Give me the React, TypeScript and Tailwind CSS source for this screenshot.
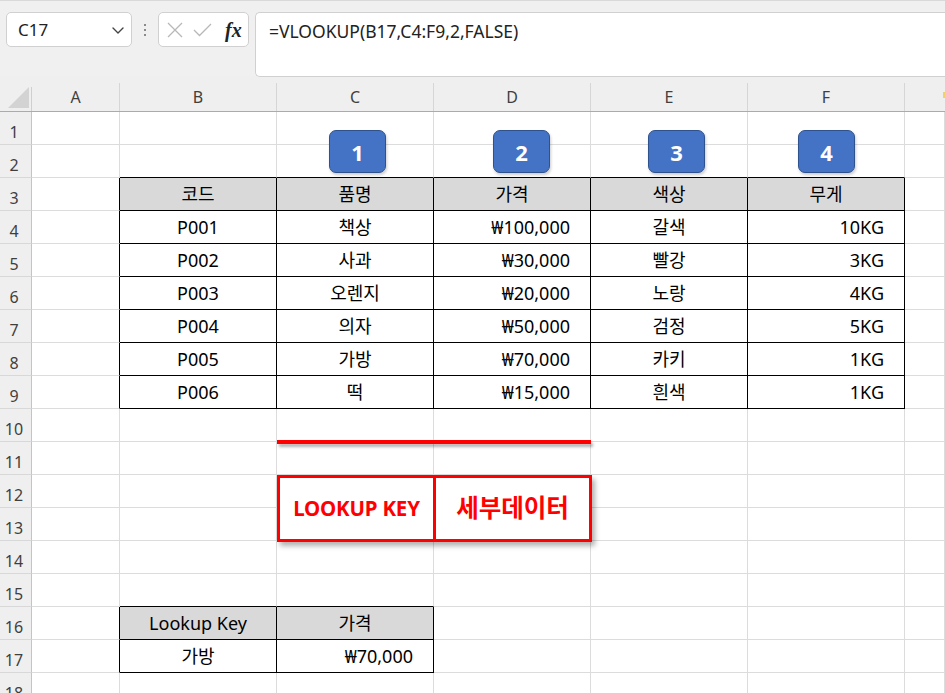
import React from "react";

const FONT = { fontFamily: '"Noto Sans", "Noto Sans CJK KR", sans-serif' };

const COLS = [
  { key: "A", w: "w-[88px]" },
  { key: "B", w: "w-[157px]" },
  { key: "C", w: "w-[157px]" },
  { key: "D", w: "w-[157px]" },
  { key: "E", w: "w-[157px]" },
  { key: "F", w: "w-[157px]" },
  { key: "", w: "flex-1" },
];

type Cell = { text: string; right?: boolean };

// sheet contents keyed by row, then column index (A = 0)
const DATA: Record<number, Record<number, Cell>> = {
  3: { 1: { text: "코드" }, 2: { text: "품명" }, 3: { text: "가격" }, 4: { text: "색상" }, 5: { text: "무게" } },
  4: { 1: { text: "P001" }, 2: { text: "책상" }, 3: { text: "₩100,000", right: true }, 4: { text: "갈색" }, 5: { text: "10KG", right: true } },
  5: { 1: { text: "P002" }, 2: { text: "사과" }, 3: { text: "₩30,000", right: true }, 4: { text: "빨강" }, 5: { text: "3KG", right: true } },
  6: { 1: { text: "P003" }, 2: { text: "오렌지" }, 3: { text: "₩20,000", right: true }, 4: { text: "노랑" }, 5: { text: "4KG", right: true } },
  7: { 1: { text: "P004" }, 2: { text: "의자" }, 3: { text: "₩50,000", right: true }, 4: { text: "검정" }, 5: { text: "5KG", right: true } },
  8: { 1: { text: "P005" }, 2: { text: "가방" }, 3: { text: "₩70,000", right: true }, 4: { text: "카키" }, 5: { text: "1KG", right: true } },
  9: { 1: { text: "P006" }, 2: { text: "떡" }, 3: { text: "₩15,000", right: true }, 4: { text: "흰색" }, 5: { text: "1KG", right: true } },
  16: { 1: { text: "Lookup Key" }, 2: { text: "가격" } },
  17: { 1: { text: "가방" }, 2: { text: "₩70,000", right: true } },
};

const ROWS = Array.from({ length: 18 }, (_, i) => i + 1);

function inTable(r: number, c: number) {
  const main = r >= 3 && r <= 9 && c >= 1 && c <= 5;
  const sub = r >= 16 && r <= 17 && c >= 1 && c <= 2;
  return main || sub;
}

function isHeader(r: number, c: number) {
  return (r === 3 || r === 16) && inTable(r, c);
}

function FormulaBar() {
  return (
    <div className="flex h-[76px] items-start border-t border-t-[#d9d9d9] bg-[#f0f0f0] pl-[6px] pt-[11px]">
      {/* name box */}
      <div className="flex h-[35px] w-[126px] items-center justify-between rounded-[5px] border border-[#d0d0d0] bg-white pl-[11px] pr-[6px]">
        <span className="text-[17px] leading-none text-[#222]">C17</span>
        <svg width="14" height="14" viewBox="0 0 14 14" fill="none">
          <path d="M2 5 L7 10 L12 5" stroke="#444" strokeWidth="1.4" strokeLinecap="round" strokeLinejoin="round" />
        </svg>
      </div>
      <div className="flex h-[35px] w-[26px] flex-col items-center justify-center gap-[3px]">
        <span className="h-[2px] w-[2px] bg-[#8a8a8a]" />
        <span className="h-[2px] w-[2px] bg-[#8a8a8a]" />
        <span className="h-[2px] w-[2px] bg-[#8a8a8a]" />
      </div>
      {/* cancel / enter / fx */}
      <div className="flex h-[35px] w-[91px] items-center rounded-[5px] border border-[#d0d0d0] bg-white pl-[8px]">
        <svg width="16" height="16" viewBox="0 0 16 16" fill="none">
          <path d="M1 1 L15 15 M15 1 L1 15" stroke="#b8b8b8" strokeWidth="1.3" />
        </svg>
        <svg className="ml-[10px]" width="19" height="14" viewBox="0 0 19 14" fill="none">
          <path d="M1 7 L6.5 12.5 L18 1" stroke="#b8b8b8" strokeWidth="1.3" />
        </svg>
        <span
          className="ml-[13px] text-[20px] font-bold italic leading-none text-[#222]"
          style={{ fontFamily: '"Liberation Serif", "DejaVu Serif", serif' }}
        >
          fx
        </span>
      </div>
      {/* formula text */}
      <div className="ml-[6px] h-[65px] flex-1 rounded-l-[5px] border border-r-0 border-[#d0d0d0] bg-white pl-[13px] pt-[7px]">
        <span className="text-[17.5px] leading-[20px] text-[#222]">=VLOOKUP(B17,C4:F9,2,FALSE)</span>
      </div>
    </div>
  );
}

function ColumnHeaders() {
  return (
    <div className="flex h-[36px] border-b border-b-[#ababab] bg-[#efefef]">
      <div className="flex w-[32px] items-end">
        <svg width="31" height="36" viewBox="0 0 31 36">
          <polygon points="8,33 29,33 29,12" fill="#d3d3d3" />
        </svg>
        <span className="h-[24px] w-px bg-[#cfcfcf]" />
      </div>
      {COLS.map((col, i) => (
        <div key={i} className={`flex ${col.w} items-end`}>
          <span className="flex-1 self-center pt-[7px] text-center text-[16px] leading-none text-[#3f3f3f]">
            {col.key}
          </span>
          {col.key ? (
            <span className="h-[28px] w-px bg-[#d6d6d6]" />
          ) : (
            <span className="mb-[13px] h-[6px] w-[2px] self-end bg-[#f2d16b]" />
          )}
        </div>
      ))}
    </div>
  );
}

function SheetRow({ r }: { r: number }) {
  return (
    <div className="flex h-[33px] shrink-0">
      <div className="flex w-[32px] items-center justify-center border-r border-b border-r-[#c4c4c4] border-b-[#d8d8d8] bg-[#efefef] pr-[3px] pt-[7px] text-[16px] leading-none text-[#3f3f3f]">
        {r}
      </div>
      {COLS.map((col, c) => {
        const cell = DATA[r]?.[c];
        const blackR = inTable(r, c) || inTable(r, c + 1);
        const blackB = inTable(r, c) || inTable(r + 1, c);
        return (
          <div
            key={c}
            className={[
              "flex items-center border-r border-b text-[18px] leading-none text-black",
              col.w,
              blackR ? "border-r-black" : "border-r-[#dcdcdc]",
              blackB ? "border-b-black" : "border-b-[#dcdcdc]",
              isHeader(r, c) ? "bg-[#d9d9d9]" : "bg-white",
              cell?.right ? "justify-end pr-[20px]" : "justify-center",
            ].join(" ")}
          >
            {cell?.text}
          </div>
        );
      })}
    </div>
  );
}

function Badge({ n, left }: { n: number; left: string }) {
  return (
    <div
      className={`absolute top-[130px] ${left} flex h-[43px] w-[57px] items-center justify-center rounded-[7px] border border-[#2f528f] bg-[#4472c4] text-[22px] font-bold leading-none text-white shadow-[1px_2px_3px_rgba(0,0,0,0.2)]`}
    >
      {n}
    </div>
  );
}

export default function App() {
  return (
    <div className="relative h-[693px] w-[945px] overflow-hidden bg-white" style={FONT}>
      <FormulaBar />
      <ColumnHeaders />
      <div className="flex flex-col">
        {ROWS.map((r) => (
          <SheetRow key={r} r={r} />
        ))}
      </div>

      {/* floating shapes */}
      <Badge n={1} left="left-[329px]" />
      <Badge n={2} left="left-[493px]" />
      <Badge n={3} left="left-[648px]" />
      <Badge n={4} left="left-[798px]" />

      <div className="absolute left-[277px] top-[440px] h-[4px] w-[314px] bg-[#ff0000] shadow-[2px_3px_3px_rgba(0,0,0,0.3)]" />

      <div className="absolute left-[277px] top-[475px] flex h-[67px] w-[315px] border-[3px] border-[#ff0000] bg-white shadow-[3px_4px_5px_rgba(0,0,0,0.3)]">
        <div className="flex w-[156px] items-center justify-center border-r-[3px] border-r-[#ff0000] text-[20.5px] font-bold tracking-[-0.2px] text-[#ff0000]">
          LOOKUP KEY
        </div>
        <div className="flex flex-1 items-center justify-center text-[24.5px] font-bold text-[#ff0000]">
          세부데이터
        </div>
      </div>
    </div>
  );
}
